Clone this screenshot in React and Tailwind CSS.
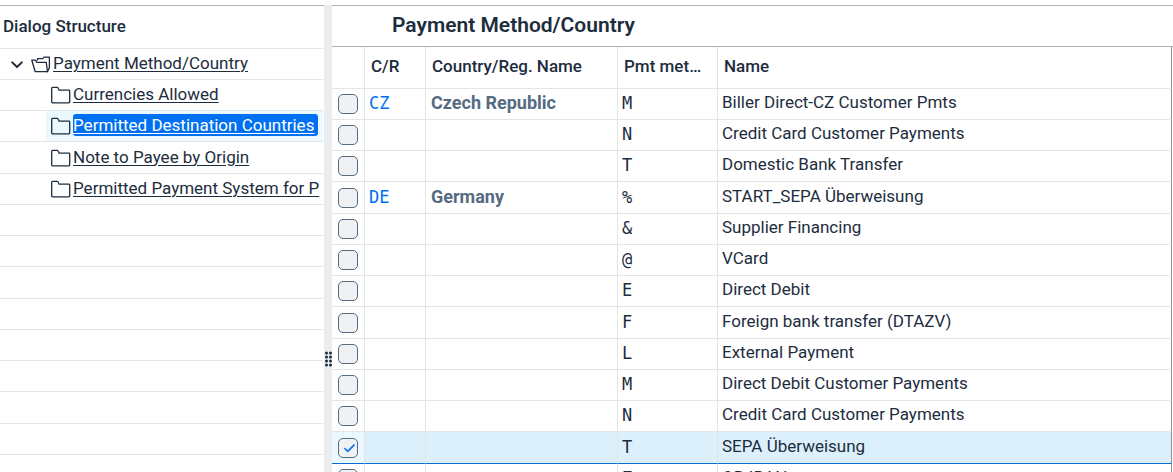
import React from 'react';

const ROW = 'h-[31px] [&:nth-child(4n)]:h-8';

const treeItems = [
  { label: 'Payment Method/Country', root: true },
  { label: 'Currencies Allowed' },
  { label: 'Permitted Destination Countries', selected: true },
  { label: 'Note to Payee by Origin' },
  { label: 'Permitted Payment System for P' },
];

const emptyTreeRows = Array.from({ length: 9 });

const rows = [
  ['CZ', 'Czech Republic', 'M', 'Biller Direct-CZ Customer Pmts'],
  ['', '', 'N', 'Credit Card Customer Payments'],
  ['', '', 'T', 'Domestic Bank Transfer'],
  ['DE', 'Germany', '%', 'START_SEPA Überweisung'],
  ['', '', '&', 'Supplier Financing'],
  ['', '', '@', 'VCard'],
  ['', '', 'E', 'Direct Debit'],
  ['', '', 'F', 'Foreign bank transfer (DTAZV)'],
  ['', '', 'L', 'External Payment'],
  ['', '', 'M', 'Direct Debit Customer Payments'],
  ['', '', 'N', 'Credit Card Customer Payments'],
  ['', '', 'T', 'SEPA Überweisung'],
  ['', '', 'Z', 'QR-IBAN'],
];
const CHECKED = 11;

function Folder() {
  return (
    <svg className="h-5 w-5 shrink-0" viewBox="0 0 20 20" fill="none" stroke="#1d2d3e" strokeWidth="1.3" strokeLinejoin="round" aria-hidden="true">
      <path d="M0.7 3.2a.8.8 0 0 1 .8-.8h4.6c.8 0 1 .4 1.2 1l.8 1.8h9.8a.8.8 0 0 1 .8.8v11a.8.8 0 0 1-.8.8H1.5a.8.8 0 0 1-.8-.8z" />
    </svg>
  );
}

function OpenFolder() {
  return (
    <svg className="h-5 w-5 shrink-0" viewBox="0 0 20 20" fill="none" stroke="#1d2d3e" strokeWidth="1.3" strokeLinejoin="round" strokeLinecap="round" aria-hidden="true">
      <path d="M0.8 6.2h3.6l1.2 2.1h9.6l1.3 9.4H4.2z" />
      <path d="M6 6.2l.8-1.6h4.8l1.4-1.4h5.4v10.4l-1.9 4" />
    </svg>
  );
}

function Chevron() {
  return (
    <svg className="h-5 w-3 shrink-0" viewBox="0 0 12 20" fill="none" stroke="#1d2d3e" strokeWidth="2" strokeLinecap="round" strokeLinejoin="round" aria-hidden="true">
      <path d="M1.2 8.4L6 13l4.8-4.6" />
    </svg>
  );
}

function TreeItem({ label, root, selected }) {
  return (
    <li className={`${ROW} flex border-b border-[#e3e4e6] ${root ? 'pl-[11px]' : 'pl-[46px]'}`}>
      <div className={`flex min-w-0 flex-1 items-center ${selected ? 'bg-[#ebf8ff]' : ''} ${root ? '' : 'pl-[5px]'}`}>
        {root && (
          <button type="button" aria-label="Collapse" className="mr-2 flex">
            <Chevron />
          </button>
        )}
        {root ? <OpenFolder /> : <Folder />}
        <a
          href="#"
          className={`mb-0.5 ml-[2px] whitespace-nowrap leading-[22px] underline decoration-1 underline-offset-2 ${
            selected ? 'rounded-[3px] bg-[#0070f2] pr-1 text-white' : ''
          }`}
        >
          {label}
        </a>
      </div>
    </li>
  );
}

function DialogStructure() {
  return (
    <nav className="w-[324px] shrink-0 overflow-hidden border-t border-[#a9b4be] pr-px">
      <h2 className="flex h-[43px] items-center border-b border-[#e3e4e6] pl-[3px] font-medium">Dialog Structure</h2>
      <ul>
        {treeItems.map((item) => (
          <TreeItem key={item.label} {...item} />
        ))}
        {emptyTreeRows.map((_, i) => (
          <li key={i} className={`${ROW} border-b border-[#e3e4e6]`} />
        ))}
      </ul>
    </nav>
  );
}

function Splitter() {
  return (
    <div className="w-2 shrink-0 bg-[#ebecee] pt-[346px]">
      <svg className="mx-auto h-4 w-[7px]" viewBox="0 0 7 16" fill="#1d2d3e" aria-hidden="true">
        {[1.5, 5.5].map((x) =>
          [2, 6, 10, 14].map((y) => <circle key={`${x}-${y}`} cx={x} cy={y} r="1.5" />)
        )}
      </svg>
    </div>
  );
}

function PaymentTable() {
  const th = 'h-[42px] truncate border-b border-r border-[#e3e4e6] pb-0.5 pl-[6px] text-left font-medium';
  const td = 'truncate border-b border-r border-[#e3e4e6] leading-5';
  const mono = "font-['DejaVu_Sans_Mono',monospace]";
  return (
    <main className="min-w-0 flex-1 border-t border-[#a9b4be]">
      <h1 className="flex h-[41px] items-center border-b border-[#a9b4be] pl-[60px] text-[21px] font-semibold">
        Payment Method/Country
      </h1>
      <div className="pr-px">
        <table className="w-full table-fixed border-separate border-spacing-0">
          <colgroup>
            <col className="w-[33px]" />
            <col className="w-[61px]" />
            <col className="w-[192px]" />
            <col className="w-[100px]" />
            <col />
          </colgroup>
          <thead>
            <tr>
              <th className={th} aria-label="Select" />
              <th className={th}>C/R</th>
              <th className={th}>Country/Reg. Name</th>
              <th className={`${th} pr-3`}>Pmt method</th>
              <th className={`${th} border-r-[#8f8f8f]`}>Name</th>
            </tr>
          </thead>
          <tbody>
            {rows.map(([code, country, method, name], i) => {
              const on = i === CHECKED;
              const line = on ? 'border-b-[#0a6ed1] bg-[#dcf0fc]' : '';
              return (
                <tr key={i} className={ROW}>
                  <td className={`border-b border-r border-[#e3e4e6] p-0 ${on ? 'border-b-[#0a6ed1] bg-[#ebf8ff]' : ''}`}>
                    <label className="grid h-5 justify-center">
                      <input
                        type="checkbox"
                        defaultChecked={on}
                        aria-label={`Select ${name}`}
                        className="peer col-start-1 row-start-1 h-5 w-5 appearance-none rounded-[5px] border border-[#556b82] bg-[#eff1f3]"
                      />
                      <svg className="pointer-events-none col-start-1 row-start-1 hidden h-5 w-5 peer-checked:block" viewBox="0 0 20 20" fill="none" stroke="#0070f2" strokeWidth="1.6" aria-hidden="true">
                        <path d="M6.5 10.2l3.2 3.2L16.5 6.6" />
                      </svg>
                    </label>
                  </td>
                  <td className={`${td} ${line} ${mono} pb-0.5 pl-1`}>
                    {code && <a href="#" className="text-[#0070f2]">{code}</a>}
                  </td>
                  <td className={`${td} ${line} pb-0.5 pl-[5px] text-[18px] font-bold text-[#556b82]`}>{country}</td>
                  <td className={`${td} ${line} ${mono} pb-0.5 pl-1`}>{method}</td>
                  <td className={`${td} ${line} border-r-[#8f8f8f] pb-1 pl-1`}>{name}</td>
                </tr>
              );
            })}
          </tbody>
        </table>
      </div>
    </main>
  );
}

export default function App() {
  return (
    <div className="flex h-screen overflow-hidden bg-white pt-[5px] font-[Roboto,sans-serif] text-[17px] text-[#1d2d3e]">
      <DialogStructure />
      <Splitter />
      <PaymentTable />
    </div>
  );
}
